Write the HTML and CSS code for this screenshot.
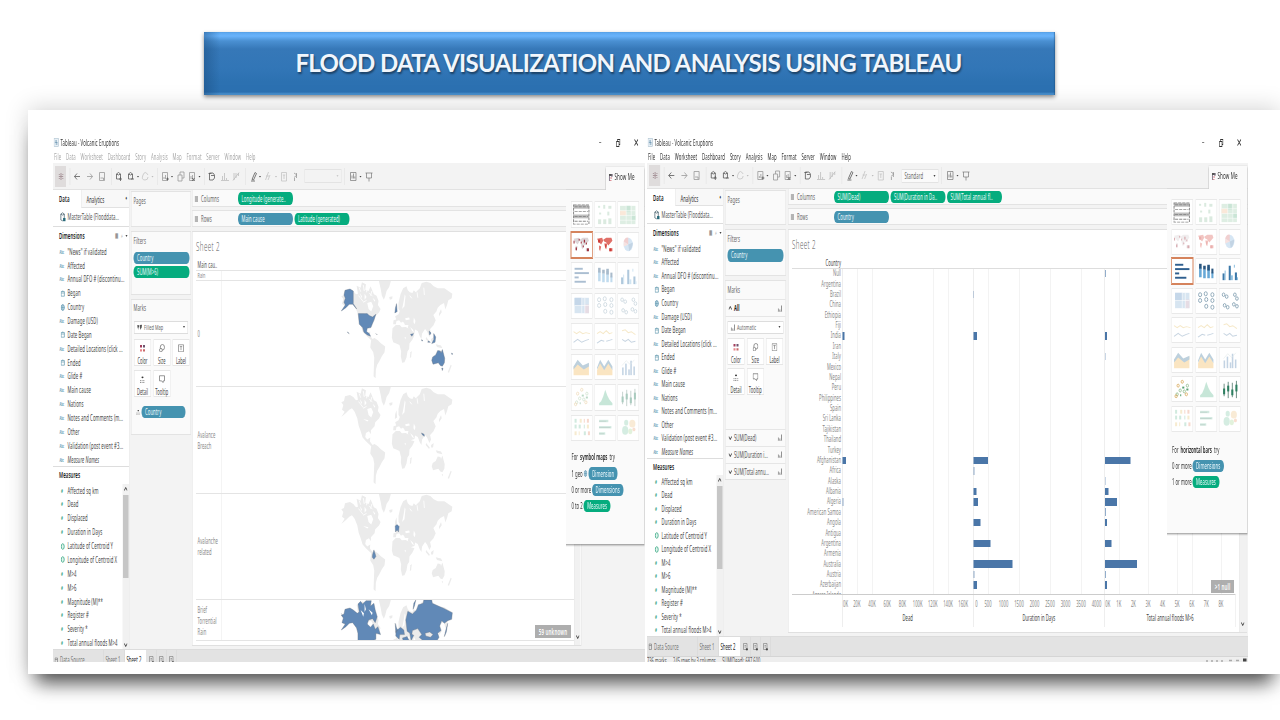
FILE: index.html
```html
<!DOCTYPE html>
<html lang="en">
<head>
<meta charset="utf-8">
<title>Flood data visualization</title>
<link rel="stylesheet" href="styles.css">
</head>
<body>
<svg class="defs" width="0" height="0">
  <symbol id="world" viewBox="30 0 340 320" preserveAspectRatio="none">
    <path d="M45 28L60 24L70 30L78 40L84 38L80 14L92 20L96 4L108 10L106 26L116 30L122 16L132 40L140 44L146 60L144 72L152 84L148 94L136 106L134 118L123 130L123 142L117 133L108 138L106 150L112 158L121 152L120 164L128 174L124 178L108 163L98 152L92 132L86 116L82 94L74 74L66 64L58 68L48 78L34 90L44 74L36 68L40 54L34 46L42 42Z"/>
    <path d="M124 176L134 171L144 178L152 186L166 197L164 214L156 226L148 242L142 252L138 266L137 292L131 286L132 258L133 230L130 214L121 200Z"/>
    <path d="M147 0H183L178 18L170 30L166 46L162 56L156 44L152 22Z"/>
    <path d="M188 142L198 132L210 132L216 139L228 138L238 144L244 160L254 163L248 176L239 188L238 204L233 212L230 230L224 244L217 246L213 226L214 212L209 192L199 188L190 184L186 170Z"/>
    <path d="M242 214L246 210L244 228L240 232Z"/>
    <path d="M178 48L188 46L187 54L180 56ZM196 82L200 70L202 92L195 96Z"/>
    <path d="M206 66L212 40L220 22L230 16L234 28L240 34L248 36L252 28L258 34L270 22L276 6L290 2L302 6L312 16L324 22L344 22L356 30L368 38L366 52L356 58L352 72L347 86L343 66L332 72L324 80L320 92L311 102L318 118L311 134L301 144L304 158L299 168L292 152L286 144L277 158L275 174L270 166L264 150L256 146L254 156L242 160L234 140L236 132L222 132L218 122L214 126L208 118L200 120L198 130L190 130L191 118L199 116L196 106L206 100L210 90L206 84Z"/>
    <path d="M306 238L309 228L318 222L324 209L332 210L334 216L338 206L345 232L344 246L338 256L332 254L326 246L310 250ZM336 262L340 262L338 269ZM363 252L366 254L358 276L354 274Z"/>
    <path d="M289 168L300 182L298 186L288 174ZM304 174L312 168L310 182L304 182ZM318 190L334 194L338 202L322 198ZM328 98L334 84L336 94L328 106Z"/>
    <g class="water"><path d="M90 36L96 46L94 52ZM104 38L110 48L104 56ZM112 66L124 62L130 76L124 92L116 84ZM128 50L136 58L134 62ZM222 58L225 40L227 46L224 76L217 84ZM252 110L257 120L255 130L251 124ZM226 112L238 110L240 116L228 118ZM202 128L222 124L226 134L212 132ZM241 138L247 150L253 154L249 146ZM100 96L116 100L112 104ZM224 170L228 168L227 176Z"/><path d="M100 12L103 30M86 44L100 62M118 36L128 46M88 20L92 32M112 14L110 34M126 30L122 44M100 64L110 58M262 34L264 50M282 20L284 42M240 44L246 52" fill="none" stroke="#fff" stroke-width="2.5"/></g>
  </symbol>

  <symbol id="tools-main" viewBox="0 0 249 27">
    <rect x="2" y="3" width="11" height="21" fill="#dfdcdc"/>
    <path d="M8 10v7M5.800 13.500h4.400M6.300 11v1M9.800 11v1M6.300 15v1M9.800 15v1" stroke="#a8959a" stroke-width="1"/>
    <path d="M17 5v17M58.500 5v17M104.500 5v17M151.500 5v17M192.500 5v17" stroke="#e3e3e3" stroke-width=".6"/>
    <path d="M27 13.500H21.500M24 10.500L21.500 13.500L24 16.500" class="ic dark"/>
    <path d="M34 13.500H39.500M37 10.500L39.500 13.500L37 16.500" class="ic"/>
    <path d="M46.500 9.500h5v8h-5zM47.500 15h3v2" class="ic"/>
    <g class="ic dark"><path d="M63.500 11q2-3 4 0v5h-4zM63.500 11q2 2 4 0"/><path d="M66 16h3M67.500 14v4"/><path d="M75.500 11q2-3 4 0v5h-4zM75.500 11q2 2 4 0"/><path d="M78 16h3"/></g>
    <path d="M95 12q-3-5-5 0t2 5q3 0 3-3" class="ic soft"/>
    <path d="M84 13h2l-1 1.500zM118 13h2l-1 1.500zM145.500 13h2l-1 1.500zM206 13h2l-1 1.500z" fill="#444"/>
    <path d="M98.500 13h2l-1 1.500zM222 13h2l-1 1.500z" fill="#bbb"/>
    <g class="ic"><path d="M109.500 9.500h5v8h-5zM111 16v-2M112.500 16v-4M125 12h4v6h-4zM127 12v-3h4v6h-2M136.500 9.500h5v8h-5zM138 16v-3M139.500 16v-4"/></g>
    <path d="M113 16h3M114.500 14.500v3M139 15l2.500 3M141.500 15l-2.500 3" class="ic dark"/>
    <path d="M156.500 10h3.500l1.500 2v3l-1.500 2h-3.500zM155.500 10.500h3M158 12.500h3" class="ic dark"/>
    <g class="ic sort"><path d="M169.500 17v-4M171.500 17v-7M173.500 17v-2M168 17.500h8M181 10v7M183 10v5M185.500 10v3M180 17.500l6-8"/></g>
    <path d="M199 16.500l3-7 1.500 1-3 6.500zM198 18h4" class="ic dark"/>
    <path d="M212.500 17l3-8M215 17l2-5M213 13h3" class="ic soft"/>
    <path d="M228.500 9.500h5v8.500h-5zM229.800 12h2.400M231 12v4" class="ic soft"/>
    <path d="M241 10l3 2-3 2.500M243.500 10v5M241.500 15v3" class="ic"/>
  </symbol>
  <symbol id="tools-end" viewBox="0 0 36 27">
    <path d="M3 5v17" stroke="#e3e3e3" stroke-width=".6"/>
    <path d="M9 9.500h5.500v8h-5.500zM10.500 15.500v-3M12 15.500v-5M13.300 15.500v-2M24 10h7M25 10v5h5v-5M27.500 15v3.500" class="ic mid"/>
    <path d="M18 13h2l-1 1.500z" fill="#444"/>
  </symbol>

  <symbol id="i-date" viewBox="0 0 5 7"><path d="M.7 1.500h3.600v4.700H.7zM.7 3h3.600M2.500.5v1" fill="none" stroke="#5b94ab" stroke-width=".7"/></symbol>
  <symbol id="i-globe" viewBox="0 0 5 7"><ellipse cx="2.500" cy="3.500" rx="1.800" ry="2.900" fill="#d2e6ee" stroke="#4a87a5" stroke-width=".7"/><path d="M2.500.6v5.800M.7 3.500h3.600" stroke="#4a87a5" stroke-width=".5"/></symbol>
  <symbol id="i-geo" viewBox="0 0 5 7"><ellipse cx="2.500" cy="3.500" rx="1.600" ry="2.800" fill="#e2f5ee" stroke="#2da37c" stroke-width=".8"/></symbol>
  <symbol id="i-db" viewBox="0 0 7 10"><path d="M1 2q2-2.400 4 0v6q-2 1.500-4 0zM1 2.200q2 1.800 4 0" fill="none" stroke="#4a6470" stroke-width=".8"/><rect x="3.600" y="6" width="2.800" height="3.200" fill="#276a7a"/></symbol>
  <symbol id="i-app" viewBox="0 0 6 9"><rect x=".5" y=".5" width="5" height="8" fill="#e8f0f6" stroke="#a9bfcd" stroke-width=".6"/><path d="M3 2v5M1.500 4.500h3M1.700 3h.8M3.700 6h.8" stroke="#5484a4" stroke-width=".6"/></symbol>
  <symbol id="i-shelf" viewBox="0 0 4 6"><path d="M0 1h4M0 3h4M0 5h4" stroke="#555" stroke-width=".9"/></symbol>
  <symbol id="i-bars" viewBox="0 0 6 7"><path d="M1 6.500v-3M2.800 6.500v-2M4.800 6.500v-6" stroke="#888" stroke-width="1"/><path d="M0 6.500h6" stroke="#aaa" stroke-width=".5"/></symbol>
  <symbol id="i-map" viewBox="0 0 6 7"><path d="M.3 1l2 .3v1.400l-.8 1.200v2L.6 3.500zM3 1l2.500-.3-.5 3.300-.7.500-.4 1.500-.7-2z" fill="#555"/></symbol>
  <symbol id="i-detail" viewBox="0 0 6 9"><circle cx="3" cy="2.500" r="1" fill="#333"/><path d="M.5 6h5M.5 8h5" stroke="#888" stroke-width="1" stroke-dasharray="1 .6"/></symbol>
  <symbol id="i-color" viewBox="0 0 6 9"><path d="M.5 1h2v2.800h-2z" fill="#a33e5c"/><path d="M3.500 1h2v2.800h-2z" fill="#6d5471"/><path d="M.5 5.500h2v2.500h-2z" fill="#e8848a"/><path d="M3.500 5.500h2v2.500h-2z" fill="#c86a6a"/></symbol>
  <symbol id="i-size" viewBox="0 0 6 9"><ellipse cx="3.400" cy="3.500" rx="2.100" ry="3" fill="none" stroke="#666" stroke-width=".7"/><ellipse cx="1.900" cy="6.500" rx="1.400" ry="1.900" fill="#fff" stroke="#666" stroke-width=".7"/></symbol>
  <symbol id="i-label" viewBox="0 0 6 9"><path d="M.5.800h5v7.400h-5zM1.800 2.700h2.400M3 2.700v3.800" fill="none" stroke="#666" stroke-width=".6"/></symbol>
  <symbol id="i-tip" viewBox="0 0 6 9"><path d="M.5.800h5v5.400H4.300L4 8 2.600 6.200H.5z" fill="none" stroke="#666" stroke-width=".7"/></symbol>
  <symbol id="i-showme" viewBox="0 0 5 9"><path d="M.5 1h3.800v2H.5z" fill="#555"/><path d="M1 3v5M3.800 1v3" stroke="#7a6b80" stroke-width="1"/><path d="M2 5h1.800M2 7.500h1.200" stroke="#d0606a" stroke-width="1"/></symbol>
  <symbol id="i-newtab" viewBox="0 0 5 8"><path d="M.5.500h3.500v6h-3.500zM1.500 2.500h1.500M1.500 4h1.500" fill="none" stroke="#777" stroke-width=".6"/><path d="M2.800 6.300h2.200M3.900 5v2.600" stroke="#333" stroke-width=".8"/></symbol>
</svg>

<header class="banner"><span>FLOOD DATA VISUALIZATION AND ANALYSIS USING TABLEAU</span></header>
<main class="frame" id="frame"></main>
<script src="app.js"></script>
</body>
</html>
```

FILE: styles.css
```css
* { box-sizing: border-box; }
body {
  margin: 0; width: 1280px; height: 720px; overflow: hidden; background: #fff;
  font-family: "Noto Sans", "Open Sans", sans-serif; color: #333;
}
svg { display: block; flex: none; }
.defs { position: absolute; }
.ic { fill: none; stroke: #999; stroke-width: .8; }
.ic.dark { stroke: #5a5a5a; }
.ic.mid { stroke: #777; stroke-width: .7; }
.ic.soft { stroke: #c4c4c4; }
.ic.sort { stroke: #bdbdbd; }
.right .ic.sort { stroke: #808080; }

.banner {
  width: 851px; height: 63px; margin: 32px 0 0 204px;
  display: flex; align-items: center; justify-content: center;
  background:
    linear-gradient(to right, rgba(25,75,125,.45), rgba(49,117,181,0) 16px),
    linear-gradient(to bottom, #5ba6ee 0, #69b3fb 4px, #4a90d2 9px, #3678b8 17px, #3276b7 36px, #2c71b1 50px, #2c71b2 60px, #4b92d0 62px);
  box-shadow: 0 2px 4px rgba(0,0,0,.45), inset -1px 0 1px rgba(30,80,130,.5);
}
.banner span {
  font: bold 24px Lato, "Open Sans", sans-serif; color: #f1f6fc; white-space: nowrap;
  letter-spacing: -.63px; text-shadow: 1px 2px 2px rgba(0,0,0,.45); padding: 0 2px 2px 0;
}
.frame {
  display: flex; gap: 1px; width: 1252px; height: 564px; margin: 15px 0 0 28px; padding: 26px 0 0 25px;
  background: #fff;
  box-shadow: 0 17px 18px -8px rgba(0,0,0,.66), 0 -2px 22px rgba(0,0,0,.17);
}
.slot { width: 593px; height: 526px; flex: none; }
.slot.right { width: 601px; }

/* Windows are laid out at double width and condensed horizontally. */
.win {
  position: relative; width: 1184px; height: 526px; overflow: hidden;
  display: flex; flex-direction: column;
  transform: scaleX(.5); transform-origin: 0 0;
  font-size: 8.500px; line-height: 10px; white-space: nowrap;
}
.right .win { width: 1202px; }
.left { --row: 13.87px; }
.right { --row: 13.52px; }

.titlebar { height: 13px; display: flex; align-items: center; padding-left: 1px; gap: 3px; color: #333; flex: none; }
.titlebar .ttl { flex: 1; letter-spacing: .2px; }
.titlebar i { font-style: normal; width: 36px; margin-left: -3px; text-align: center; font-size: 9px; }
.titlebar i:first-of-type { margin-left: 0; }
.titlebar i svg { margin: 0 auto; }
.menu { height: 14px; flex: none; display: flex; align-items: center; padding: 2px 0 0 2px; gap: 9.500px; letter-spacing: .2px; color: #aaa; }
.right .menu { color: #333; gap: 9.800px; }
.toolbar { height: 27px; flex: none; display: flex; align-items: center; background: #f3f3f3; border-bottom: 1px solid #e2e2e2; }
.right .toolbar { height: 26px; }
.toolbar .sel {
  width: 74px; height: 14px; margin-left: 5px; border: 1px solid #e3e3e3; padding: 0 5px 0 5px;
  display: flex; align-items: center; justify-content: space-between; font-size: 8.300px; letter-spacing: .2px; color: #666;
}
.right .toolbar .sel { background: #fafafa; }
.left .sel { color: #ccc; }
.arrow { width: 0; height: 0; border: 2.500px solid transparent; border-top: 2.500px solid #444; border-bottom: 0; flex: none; }
.left .sel .arrow { border-top-color: #ccc; }

.body { flex: none; height: 459px; display: flex; background: #f3f3f3; }
.right .body { height: 447px; }
.side { width: 153px; background: #fff; border-right: 1px solid #e2e2e2; flex: none; display: flex; flex-direction: column; }
.tabs { height: 18px; display: flex; flex: none; }
.right .tabs { height: 17px; }
.tabs b, .sect b { font-weight: 600; color: #222; }
.tabs b { width: 57px; padding: 4px 0 0 12px; font-size: 8.800px; letter-spacing: .2px; }
.tabs div { flex: 1; display: flex; justify-content: space-between; padding: 5px 4px 0 9px; background: #f8f8f8; border-left: 1px solid #e2e2e2; border-bottom: 1px solid #e2e2e2; }
.tabs div span + span { font-size: 6px; line-height: 6px; }
.source { height: 19px; flex: none; display: flex; align-items: center; gap: 3px; padding-left: 14px; border-bottom: 1px solid #ddd; letter-spacing: .1px; color: #555; }
.right .source { height: 18px; }
.sect { height: 17px; flex: none; display: flex; align-items: center; padding-left: 12px; font-size: 8.800px; }
.left .source + .sect { height: 17.800px; }
.right .source + .sect { height: 18.200px; }
.right .dims + .sect { height: 16.400px; }
.sect b { flex: 1; letter-spacing: .1px; }
.sect span { font-size: 7px; color: #777; margin-right: 5px; }
.list { display: flex; flex-direction: column; }
.dims { height: calc(var(--row) * 16); border-bottom: 1px solid #ddd; flex: none; }
.item { height: var(--row); flex: none; display: flex; align-items: center; color: #444; letter-spacing: .2px; }
.item .k { width: 29px; padding-left: 13px; flex: none; font-size: 4.800px; font-weight: bold; color: #5c9ab3; letter-spacing: 0; }
.item .k.num { font-size: 6px; padding-left: 16px; color: #2f9f80; }
.item .k svg { margin-left: 2px; }
.item.it { font-style: italic; }
.meas { display: flex; height: calc(var(--row) * 12); overflow: hidden; }
.meas .list { flex: 1; width: 0; }
.scroll { width: 13px; background: #f1f1f1; display: flex; flex-direction: column; align-items: center; flex: none; }
.scroll i { display: block; width: 11px; height: 83px; background: #c6c6c6; margin-top: 2px; flex: none; }
.scroll s { flex: 1; }
.scroll svg, .vbar svg { margin: 3px 0 2px; }

.cards { width: 125px; padding: 1px 2px 0 3px; display: flex; flex-direction: column; gap: 4px; flex: none; color: #666; }
.right .cards { width: 129px; padding: 1px 4px 0 3px; }
.card { background: #fafafa; border: 1px solid #e3e3e3; padding: 4px 4px 0; flex: none; }
.card > h4 { font: inherit; margin: 0; letter-spacing: .1px; }
.pages { height: 36px; } .right .pages { height: 35px; }
.filters { height: 64px; } .right .filters { height: 47px; }
.marks { height: 136px; padding-top: 3px; } .right .marks { height: 200px; padding: 4px 0 0; }
.right .marks > h4 { margin-left: 4px; }
.pill { height: 12.500px; border-radius: 6px; background: #4593b0; color: #eef9fd; display: flex; align-items: center; padding: 0 7px; overflow: hidden; letter-spacing: .12px; font-size: 8.500px; flex: none; }
.pill.g { background: #05ac7e; }
.filters .pill { width: 112px; height: 12.500px; margin-bottom: 1.800px; }
.filters h4 { padding-bottom: 5.500px; }
.right .filters h4 { padding-bottom: 5px; }
.mtype { height: 12.500px; margin: 8px 1px 4px; border: 1px solid #ddd; background: #fff; display: flex; align-items: center; gap: 3px; padding: 0 5px; font-size: 7.800px; }
.left .mtype { margin-bottom: 5px; }
.mtype span { flex: 1; letter-spacing: .1px; }
.right .mtype { margin: 4px 4px 4px; }
.mgrid { display: grid; grid-template-columns: repeat(3, 34px); column-gap: 4.500px; row-gap: 4px; margin-left: 1px; }
.right .mgrid { margin-left: 4px; grid-auto-rows: 26.500px; }
.mgrid div { height: 27px; background: #fff; border: 1px solid #e6e6e6; display: flex; flex-direction: column; align-items: center; padding-top: 4px; gap: 3.500px; font-size: 8px; line-height: 9px; color: #444; }
.mdetail { display: flex; align-items: center; gap: 2px; margin: 9px 0 0 5px; }
.mdetail .pill { width: 88px; }
.all { height: 18px; margin-top: 4px; border-top: 1px solid #e6e6e6; border-bottom: 1px solid #e6e6e6; display: flex; align-items: center; padding: 0 6px; gap: 4px; color: #222; }
.all b, .all span { flex: 1; }
.accs { margin-top: 34px; }
.accs .all { margin: 0; height: 17.200px; border-bottom: 0; color: #555; }

.main { flex: 1; display: flex; flex-direction: column; }
.shelf { height: 17px; flex: none; display: flex; align-items: center; gap: 3px; background: #fafafa; border: 1px solid #e3e3e3; border-top: 0; padding: 1px 0 0 4px; color: #666; letter-spacing: .15px; }
.shelf .nm { width: 84px; display: flex; align-items: center; gap: 6px; }
.shelf .pill { width: 110px; height: 12.500px; }
.shelf + .shelf { margin-top: 3px; height: 17px; border-top: 1px solid #e3e3e3; }
.right .shelf { height: 16px; } .right .shelf + .shelf { height: 17px; }
.sheet { margin-top: 4px; width: 779px; height: 415px; background: #fff; border: 1px solid #e0e0e0; display: flex; flex: none; }
.right .sheet { width: 918px; height: 404px; }
.sheet .cont { flex: 1; padding: 7px 0 0 7px; display: flex; flex-direction: column; }
.sheet h2 { font: 300 12.500px/16px "Open Sans", "Noto Sans", sans-serif; margin: 0; color: #555; letter-spacing: .8px; height: 21px; flex: none; }
.maps { width: 756px; display: flex; flex-direction: column; color: #888; }
.hdr { height: 11px; color: #555; padding-left: 3px; flex: none; font-size: 8px; letter-spacing: .1px; border-bottom: 1px solid #e4e4e4; }
.band { height: 106.500px; border-bottom: 1px solid #e4e4e4; display: flex; flex: none; overflow: hidden; font-size: 8.300px; }
.band .lb { width: 51px; border-right: 1px solid #e8e8e8; padding-left: 3px; display: flex; align-items: center; line-height: 11px; flex: none; white-space: pre; letter-spacing: .1px; }
.band svg { margin-left: 237px; width: 226px; height: 106.500px; }
.band.first { height: 9.500px; }
.band.first .lb { align-items: flex-start; line-height: 8px; font-size: 7.500px; padding-top: 0; }
.band.last { height: 41px; }
.vbar { width: 14px; margin-right: 1px; background: #f1f1f1; border-left: 1px solid #e6e6e6; display: flex; align-items: flex-end; justify-content: center; padding-bottom: 4px; }
.note { position: absolute; background: #aaa; color: #fff; font-weight: 600; font-size: 9px; letter-spacing: .3px; height: 13px; display: flex; align-items: center; justify-content: center; opacity: .95; }
.left .note { left: 964px; top: 489px; width: 72px; }
.right .note { left: 1128px; top: 444px; width: 46px; }
.land { fill: #ebebeb; } .land .water, .water { fill: #fff; }
.hot path { fill: #6189b7; stroke: #66707c; stroke-width: 1; }

.chart { display: flex; flex-direction: column; width: 887px; }
.chart .chead { height: 10px; width: 98px; text-align: right; flex: none; font-size: 8px; line-height: 9px; color: #444; letter-spacing: .1px; }
.plot { height: 327px; overflow: hidden; border-top: 1px solid #ddd; border-bottom: 1px solid #ccc; flex: none; display: grid; grid-template-columns: 100px 262px 262.500px 262.500px; }
.names { text-align: right; padding-right: 2px; font-size: 8.300px; color: #888; letter-spacing: .1px; margin-top: -.8px; }
.names div { height: 10.390px; line-height: 10.390px; }
.lane { border-left: 1px solid #ddd; }
.lane.a { background: repeating-linear-gradient(to right, transparent 0 29.400px, #f3f3f3 29.400px 30.400px); }
.lane.b { background: repeating-linear-gradient(to right, transparent 0 30px, #f3f3f3 30px 31px); }
.lane.c { background: repeating-linear-gradient(to right, transparent 0 28.200px, #f3f3f3 28.200px 29.200px); }
.lane div { height: 10.390px; padding-top: .800px; }
.lane i { display: block; height: 7.600px; background: #4a76a8; }
.axes { display: grid; grid-template-columns: 100px 262px 262.500px 262.500px; height: 32px; border-right: 1px solid #e4e4e4; }
.axes > div { border-left: 1px solid #ddd; display: flex; flex-direction: column; align-items: center; font-size: 8.300px; color: #444; gap: 4.500px; padding-top: 3.500px; min-width: 0; letter-spacing: .05px; }
.axes > div:first-child { border: 0; }
.ticks { display: flex; width: 100%; color: #888; }
.ticks span { display: flex; justify-content: center; flex: none; }
.ticks span:first-child { width: 12px; margin-right: 1.500px; }
.tk-a span { width: 30.400px; } .tk-b span { width: 31px; } .tk-c span { width: 29.200px; }

.bottom { height: 20px; flex: none; background: #e3e3e3; display: flex; border-top: 1px solid #dcdcdc; color: #777; align-items: stretch; }
.bottom > * { display: flex; align-items: center; border-right: 1px solid #d5d5d5; padding: 0 9px 0 6px; }
.bottom .ds { width: 102px; padding: 0 0 0 3px; gap: 4px; letter-spacing: .1px; }
.bottom .s1 { width: 42px; padding: 0 2px 0 3px; }
.bottom .on { background: #fff; color: #222; width: 43px; padding: 0 3px; }
.bottom .nt { width: 20px; padding: 0 5px; }
.left .bottom { height: 21px; }
.status { height: 6px; flex: none; overflow: hidden; background: #eee; border-top: 1px solid #d5d5d5; color: #555; display: flex; gap: 13px; font-size: 8px; line-height: 8px; }
.status svg { margin-left: auto; }

.showme { position: absolute; right: 1px; top: 31px; width: 157px; height: 377px; display: flex; flex-direction: column; align-items: flex-end; filter: drop-shadow(0 1px 1px rgba(0,0,0,.45)); }
.right .showme { width: 161px; height: 367px; top: 30px; }
.smtab { width: 78px; height: 23px; background: #fafafa; display: flex; align-items: center; gap: 3px; padding: 0 0 3px 6px; font-size: 9px; letter-spacing: .3px; flex: none; }
.smbody { flex: 1; width: 100%; background: #fafafa; padding: 11px 0 0 10px; }
.thumbs { display: grid; grid-template-columns: repeat(3, 43px); column-gap: 3.500px; grid-auto-rows: 26.500px; row-gap: 4px; }
.thumbs div { background: #fff; border: 1px solid #e9e9e9; display: flex; align-items: center; justify-content: center; }
.thumbs div.sel { border: 1.500px solid #d5835c; outline: .5px solid #d5835c; }
.thumbs div svg { opacity: .4; }
.thumbs div.half svg { opacity: .75; }
.thumbs div.en svg { opacity: 1; }
.right .smbody { padding: 10px 0 0 9px; }
.right .thumbs { grid-auto-rows: 26px; row-gap: 3.550px; column-gap: 4.500px; }
.try { margin-top: 10px; padding-left: 1px; font-size: 8.500px; display: flex; flex-direction: column; gap: 3.800px; }
.right .try { margin-top: 12px; gap: 3.500px; }
.try b { font-weight: 600; color: #222; margin: 0 2px; }
.try div { display: flex; align-items: center; gap: 2px; height: 12.500px; }
.try .pill { padding: 0 7px; height: 12.500px; }
```

FILE: app.js
```js
const svg = (id, w, h, c = '') =>
  `<svg class="${c}" width="${w * 2}" height="${h}" preserveAspectRatio="none"><use href="#${id}" width="${w * 2}" height="${h}"/></svg>`;
document.querySelectorAll('.defs symbol').forEach(s => s.setAttribute('preserveAspectRatio', 'none'));

const dims = [['a', '"News" if validated'], ['a', 'Affected'], ['a', 'Annual DFO # (discontinu...'], ['d', 'Began'], ['g', 'Country'],
  ['a', 'Damage (USD)'], ['d', 'Date Began'], ['a', 'Detailed Locations (click ...'], ['d', 'Ended'], ['a', 'Glide #'], ['a', 'Main cause'],
  ['a', 'Nations'], ['a', 'Notes and Comments (m...'], ['a', 'Other'], ['a', 'Validation (post event #3...'], ['a', 'Measure Names']];
const meas = ['Affected sq km', 'Dead', 'Displaced', 'Duration in Days', 'Latitude of Centroid Y', 'Longitude of Centroid X',
  'M>4', 'M>6', 'Magnitude (M)**', 'Register #', 'Severity *', 'Total annual floods M>4'];
const kind = k => k === 'a' ? '<span class="k">Abc</span>'
  : k === 'n' ? '<span class="k num">#</span>'
  : `<span class="k">${svg({ d: 'i-date', g: 'i-globe', e: 'i-geo' }[k], 4.5, 7)}</span>`;
const chev = up => `<svg width="7" height="4" viewBox="0 0 7 4"><path d="${up ? 'M.5 3.500L3.500.5L6.500 3.500' : 'M.5.5L3.500 3.500L6.500.5'}" fill="none" stroke="#444" stroke-width="1.100"/></svg>`;

const side = () => `<aside class="side">
  <div class="tabs"><b>Data</b><div><span>Analytics</span><span>♦</span></div></div>
  <div class="source">${svg('i-db', 6, 10)}<span>MasterTable (Flooddata...</span></div>
  <div class="sect"><b>Dimensions</b><span>▦</span><span>⌕</span><i class="arrow" style="margin-right:3px"></i></div>
  <div class="list dims">${dims.map(([k, t]) => `<div class="item${t === 'Measure Names' ? ' it' : ''}">${kind(k)}<span>${t}</span></div>`).join('')}</div>
  <div class="sect"><b>Measures</b></div>
  <div class="meas"><div class="list">${meas.map(t => `<div class="item">${kind(/Centroid/.test(t) ? 'e' : 'n')}<span>${t}</span></div>`).join('')}</div>
  <div class="scroll">${chev(true)}<i></i><s></s>${chev(false)}</div></div></aside>`;

const mgrid = `<div class="mgrid">${[['color', 'Color'], ['size', 'Size'], ['label', 'Label'], ['detail', 'Detail'], ['tip', 'Tooltip']]
  .map(([i, t]) => `<div>${svg('i-' + i, 6, 8.5)}<span>${t}</span></div>`).join('')}</div>`;
const pill = (t, g) => `<div class="pill${g ? ' g' : ''}">${t}</div>`;

const rects = (a, f) => a.map(([x, y, w, h]) => `<rect x="${x}" y="${y}" width="${w}" height="${h}" fill="${f}"/>`).join('');
const line = (d, c, w = 1) => `<path d="${d}" fill="none" stroke="${c}" stroke-width="${w}"/>`;
const dots = (a, c, r = 1) => a.map(([x, y]) => `<ellipse cx="${x}" cy="${y}" rx="${r}" ry="${r * 1.4}" fill="none" stroke="${c}" stroke-width=".8"/>`).join('');
const mini = c => `<path d="M2 7l5-1 1 3-2 4-2-2zM4 14l2 1-1 5-1-2zM8 8l3-2 5 0 1 3-4 5-2-3-2-1zM9 12h3l-1 6-1-1zM14 17h3v3h-3z" fill="${c}"/>`;
const icons = [
  rects([[2, 3, 15, 4], [2, 13, 15, 4]], '#aaa') + '<path d="M2 3h15v20H2zM3 5h13M3 10h13M3 15h13M3 20h13" fill="none" stroke="#666" stroke-dasharray="3 1"/>',
  rects([[3, 4, 2, 2], [8, 3, 2, 4], [13, 4, 3, 3], [4, 11, 2, 2], [12, 10, 2, 4], [3, 18, 3, 5], [8, 18, 3, 5], [13, 17, 3, 6]], '#a6cdb2'),
  rects([[2, 4, 15, 19]], '#aed6bb') + rects([[2, 9, 6, 5]], '#f3c7a1') + rects([[8, 4, 4, 6], [13, 14, 4, 5]], '#7cc09b') + line('M2 9h15M2 14h15M2 19h15M8 4v19M13 4v19', '#fff', .5),
  mini('#dcd6d8') + rects([[2, 9, 1, 3], [4, 16, 1.3, 3], [7, 7, 1, 2], [9, 10, 1, 2], [12, 8, 1.2, 3], [14, 11, 1, 2], [15, 17, 2, 3], [11, 14, 1, 2]], '#9c2f3d'),
  mini('#e06f68') + rects([[3, 8, 2, 3], [14, 17, 2, 3], [10, 13, 1, 3]], '#cc3a36'),
  '<ellipse cx="10" cy="13" rx="4.500" ry="7" fill="#9bc3e5"/><path d="M10 13L5.500 10Q7 5 10 6z" fill="#de8b8b"/><path d="M10 13L14.500 11Q14 17 11 20z" fill="#6b96bd"/><path d="M10 13L5.600 15L5.500 10z" fill="#f0b9b4"/>',
  rects([[3, 5, 8, 2], [3, 9.500, 14, 2], [3, 14, 4, 2], [3, 18.500, 11, 2]], '#2f5f8f'),
  rects([[3, 9, 2.5, 10], [7, 11, 2.5, 9], [11, 8, 2.5, 12], [15, 14, 2, 6]], '#67a8d6') + rects([[3, 5, 2.5, 5], [7, 7, 2.5, 4], [11, 6, 2.5, 6], [15, 10, 2, 5]], '#2a567f'),
  rects([[3, 15, 2, 7], [9, 7, 2, 15], [15, 14, 2, 8]], '#3b78a9') + rects([[5, 12, 1, 10], [11, 17, 2, 5], [17, 19, 1, 3], [14, 6, 1, 3]], '#8fc0e0'),
  rects([[3, 5, 14, 16]], '#9dbfdd') + rects([[3, 5, 7, 8]], '#6f9cc9') + rects([[13, 12, 4, 9]], '#c3a9bd') + line('M10 5v16M3 13h14M13 5v16', '#fff', .6),
  dots([[4, 7], [9.500, 6], [16, 7], [4, 13], [10, 12], [16, 13], [10, 19], [16, 20]], '#7c9aad', 1.5),
  dots([[4, 7], [7, 9], [15, 7], [17, 11], [5, 18], [8, 20], [14, 17], [17, 19]], '#7c9aad', 1.3),
  line('M2 8l3 2 3-2 3 2 3-1 4 1', '#e8c777') + line('M2 19l4-3 4 3 4-2 3-1', '#7596b5'),
  line('M2 10l3-2 3 2 3-3 3 3 3-1', '#e8c777') + line('M2 20l4-3 3 1M11 18l3-1 3-1', '#7596b5'),
  line('M4 7l3-1 3 3 3-1 4 3', '#e8c777') + line('M4 16l3 2 3-2 3 3 4-1', '#7596b5'),
  '<path d="M2 13l4-5 6 5 5-3v12H2z" fill="#f5bf68"/><path d="M2 13l4-7 5 6 6-3v4l-5 3-6-5-4 5z" fill="#5b8cab"/>',
  '<path d="M2 17l3-9 4 8 4-8 4 9v5H2z" fill="#f5bf68"/><path d="M2 14l3-8 4 7 4-7 4 7v4l-4-7-4 7-4-7-3 6z" fill="#5b8cab"/>',
  rects([[4, 14, 1.5, 8], [7, 10, 1.500, 12], [10, 16, 1.500, 6], [12, 7, 1.500, 15], [15, 13, 1.500, 9]], '#6b93ba') + line('M4 12l4-5 4 4 4-5', '#bcc', .6),
  dots([[5, 18], [8, 14], [12, 15], [15, 9]], '#8fb98a', 1.1) + dots([[6, 9], [4, 20], [10, 5], [14, 18]], '#d9a95b', 1.1) + rects([[10, 10, 2, 2], [14, 12, 2, 2], [8, 18, 1, 2]], '#5aa173'),
  '<path d="M4 21v-2l2-2 2-5 2-7 2 6 2 4 3 4v2z" fill="#74c3a0"/>',
  line('M4.500 7v13M8.500 5v17M12.500 6v15M16.500 4v18', '#4b7466', .8) + rects([[3.5, 12, 2, 6], [7.5, 9, 2, 6], [11.5, 13, 2, 6], [15.5, 8, 2, 7]], '#2e7f61'),
  rects([[3, 4, 2, 4], [3, 10, 2, 4], [7, 10, 2, 4], [12, 10, 1, 4], [12, 17, 2, 4]], '#8ecbb0') + rects([[8, 4, 2, 4], [3, 17, 2, 4], [15, 10, 2, 4], [7, 17, 1, 4]], '#eccf8b') + rects([[12, 4, 1, 4], [15, 4, 2, 4], [16, 17, 2, 4]], '#eb9f84'),
  rects([[4, 5, 9, 2.5], [4, 11.500, 12, 2.500], [4, 18, 6, 2.500]], '#92cbb5') + rects([[4, 6, 7, 1], [4, 12.500, 11, 1], [4, 19, 5, 1]], '#689a88'),
  '<ellipse cx="7" cy="16" rx="3" ry="4.500" fill="#98d3b7"/><ellipse cx="14" cy="9" rx="3" ry="4" fill="#f2cf9b"/><ellipse cx="8" cy="8" rx="2" ry="3" fill="#98d3b7"/><ellipse cx="12" cy="17" rx="2" ry="3" fill="#b9dfa9"/><ellipse cx="15.500" cy="15" rx="1.500" ry="2" fill="#eeb18f"/>',
];
const showMe = (on, sel, tips) => `<div class="showme"><div class="smtab">${svg('i-showme', 4.5, 9)}<span>Show Me</span></div>
  <div class="smbody"><div class="thumbs">${icons.map((ic, i) =>
    `<div class="${on.includes(i) ? 'en ' : i === 0 ? 'half ' : ''}${i === sel ? 'sel' : ''}"><svg width="41" height="25" viewBox="0 0 20 26" preserveAspectRatio="none">${ic}</svg></div>`).join('')}</div>
  <div class="try">${tips}</div></div></div>`;

const chrome = (inner, o) => `<div class="slot ${o.cls}"><section class="win">
  <div class="titlebar">${svg('i-app', 5.5, 9)}<span class="ttl">Tableau - Volcanic Eruptions</span><i>−</i><i><svg width="9" height="8" viewBox="0 0 9 8"><path d="M1 2.500h5v5H1zM3 2.500V.5h5v5H6" fill="none" stroke="#333" stroke-width="1.200"/></svg></i><i><svg width="9" height="7" viewBox="0 0 9 7"><path d="M1 .5l7 6M8 .5l-7 6" fill="none" stroke="#333" stroke-width="1.100"/></svg></i></div>
  <nav class="menu">${['File', 'Data', 'Worksheet', 'Dashboard', 'Story', 'Analysis', 'Map', 'Format', 'Server', 'Window', 'Help'].map(t => `<span>${t}</span>`).join('')}</nav>
  <div class="toolbar">${svg('tools-main', o.tw, 27)}<div class="sel"><span>${o.fit}</span><i class="arrow"></i></div>${svg('tools-end', 36, 27)}</div>
  <div class="body">${side()}${inner}</div>
  <div class="bottom"><span class="ds"><svg width="7" height="7" viewBox="0 0 7 7"><path d="M1 1h5v5.500H1zM1 2.500h5" fill="none" stroke="#888"/></svg>Data Source</span><span class="s1">Sheet 1</span><span class="on">Sheet 2</span>${`<span class="nt">${svg('i-newtab', 5, 8)}</span>`.repeat(3)}</div>
  ${o.extra}</section></div>`;

const shelf = (n, p) => `<div class="shelf"><span class="nm">${svg('i-shelf', 3.5, 6)}<span>${n}</span></span>${p}</div>`;
const map = (hot = '') => `<svg viewBox="30 0 340 320" preserveAspectRatio="none"><use class="land" href="#world" x="30" width="340" height="320"/><g class="hot">${hot}</g></svg>`;
const hot0 = '<path d="M45 28L60 24L70 30V68L78 80L80 84L68 70L58 70L48 80L34 90L46 72L42 64L46 52L42 42Z"/><path d="M85 98H112L118 104L128 108L138 100L132 118L127 130L123 140L112 142L110 152L118 158L122 166L112 162L102 154L98 140L88 130Z"/><path d="M200 68L202 92L195 96L197 80ZM298 150L300 162L304 156ZM312 158L318 168L316 184L306 188L312 176ZM242 160L252 158L246 166ZM296 180L302 184L294 184ZM276 176L279 180L276 180ZM52 153L58 158L54 156ZM366 216L370 220L366 220ZM138 158L142 162Z"/><path d="M306 238L309 228L318 222L324 209L332 210L334 216L338 206L345 232L344 246L338 256L332 254L326 246L310 250ZM336 262L340 262L338 269Z"/>';
const hot2 = '<path d="M196 96L202 92L208 98L206 114L202 108L197 114ZM128 182L132 168L136 180L138 188L132 196L127 190Z"/>';
const hot3 = '<path d="M45 28L60 24L70 30L82 40L88 36L84 12L92 4L98 12L108 2H124L122 18L132 10L136 30L142 50L136 68L128 56L116 60L112 72L122 82L130 72L136 88L144 80L152 104L138 100V118L128 122H84V100L80 84L68 68L58 70L48 80L34 90L46 72L36 68L40 54L34 46L42 42Z"/><path d="M34 40L38 50M252 10L258 0L254 18L250 28ZM348 92L354 70L350 96L344 110Z"/><path d="M228 60L234 34L248 42L260 30L266 14L280 10L282 0H306L308 10L326 18L340 24L368 38L366 58L354 62L344 70L336 62L330 78L334 92L324 100L328 112L322 122H280L268 112L276 104L264 86L248 92L246 104L232 94Z"/><path d="M196 70L200 84L204 90L198 98ZM198 94L212 82L222 90L224 104L210 104L208 118L198 108ZM218 114L232 110L238 122H220ZM240 100L252 106L244 122Z"/><path d="M286 100L300 96L310 104L302 112L288 108Z" style="fill:#e9e9e9"/><path d="M92 30L102 40L100 50L96 40ZM104 12L108 28L104 36ZM116 28L128 38L126 46Z" style="fill:#fff;stroke:none"/>';

const band = (c, l, m) => `<div class="band ${c}"><div class="lb">${l}</div>${m}</div>`;
const left = `<div class="cards"><div class="card pages"><h4>Pages</h4></div>
  <div class="card filters"><h4>Filters</h4>${pill('Country')}${pill('SUM(M&gt;6)', 1)}</div>
  <div class="card marks"><h4>Marks</h4><div class="mtype">${svg('i-map', 5.5, 7)}<span>Filled Map</span><i class="arrow"></i></div>${mgrid}
  <div class="mdetail">${svg('i-detail', 4.5, 6)}${pill('Country')}</div></div></div>
  <div class="main">${shelf('Columns', pill('Longitude (generate..', 1))}${shelf('Rows', pill('Main cause') + pill('Latitude (generated)', 1))}
  <div class="sheet"><div class="cont"><h2>Sheet 2</h2><div class="maps"><div class="hdr">Main cau..</div>
  ${band('first', 'Rain', '')}${band('', '0', map(hot0))}${band('', 'Avalance\nBreach', map('<path d="M275 138L283 142L284 148L278 144Z"/>'))}${band('', 'Avalanche\nrelated', map(hot2))}${band('last', 'Brief\nTorrential\nRain', map(hot3))}
  </div></div><div class="vbar">${chev(false)}</div></div></div>`;

const names = ['Null', 'Argentina', 'Brazil', 'China', 'Ethiopia', 'Fiji', 'India', 'Iran', 'Italy', 'Mexico', 'Nepal', 'Peru', 'Philippines', 'Spain', 'Sri Lanka', 'Tajikistan', 'Thailand', 'Turkey', 'Afghanistan', 'Africa', 'Alaska', 'Albania', 'Algeria', 'American Samoa', 'Angola', 'Antigua', 'Argentina', 'Armenia', 'Australia', 'Austria', 'Azerbaijan', 'Azores Islands'];
const data = {
  a: { 6: 3.500, 18: 7, 22: 2 },
  b: { 2: 1, 6: 7, 18: 29, 19: 1.500, 21: 5.500, 22: 9, 24: 13.500, 26: 34, 28: 77.500, 29: 1.500, 30: 6.500 },
  c: { 0: 2, 6: 4, 8: 1.500, 18: 51, 20: 1, 21: 7.500, 22: 24, 23: 2, 24: 4, 26: 13.500, 28: 64, 29: 2, 30: 4 },
};
const lane = k => `<div class="lane ${k}">${names.map((_, i) => `<div>${data[k][i] ? `<i style="width:${data[k][i]}px${data[k][i] < 3 ? ';opacity:.6' : ''}"></i>` : ''}</div>`).join('')}</div>`;
const axis = (k, t, a) => `<div><div class="ticks tk-${k}">${a.map(v => `<span>${v}</span>`).join('')}</div><span>${t}</span></div>`;
const acc = t => `<div class="all">${chev(false)}<span>${t}</span>${svg('i-bars', 5, 7)}</div>`;
const right = `<div class="cards"><div class="card pages"><h4>Pages</h4></div>
  <div class="card filters"><h4>Filters</h4>${pill('Country')}</div>
  <div class="card marks"><h4>Marks</h4><div class="all">${chev(true)}<b>All</b>${svg('i-bars', 5, 7)}</div>
  <div class="mtype">${svg('i-bars', 5, 7)}<span>Automatic</span><i class="arrow"></i></div>${mgrid}
  <div class="accs">${acc('SUM(Dead)')}${acc('SUM(Duration i...')}${acc('SUM(Total annu...')}</div></div></div>
  <div class="main">${shelf('Columns', pill('SUM(Dead)', 1) + pill('SUM(Duration in Da..', 1) + pill('SUM(Total annual fl..', 1))}${shelf('Rows', pill('Country'))}
  <div class="sheet"><div class="cont"><h2>Sheet 2</h2><div class="chart"><div class="chead">Country</div>
  <div class="plot"><div class="names">${names.map(n => `<div>${n}</div>`).join('')}</div>${lane('a')}${lane('b')}${lane('c')}</div>
  <div class="axes"><div></div>${axis('a', 'Dead', ['0K', '20K', '40K', '60K', '80K', '100K', '120K', '140K', '160K'])}${axis('b', 'Duration in Days', [0, 500, 1000, 1500, 2000, 2500, 3000, 3500, 4000])}${axis('c', 'Total annual floods M&gt;6', ['0K', '1K', '2K', '3K', '4K', '5K', '6K', '7K', '8K'])}</div>
  </div></div><div class="vbar">${chev(false)}</div></div></div>`;

document.getElementById('frame').innerHTML =
  chrome(left, { cls: 'left', tw: 249, fit: '', extra: '<div class="note">59 unknown</div>' + showMe([3, 4], 3,
    `<div>For <b>symbol maps</b> try</div><div>1 geo ${svg('i-globe', 4, 7)} ${pill('Dimension')}</div><div>0 or more ${pill('Dimensions')}</div><div>0 to 2 ${pill('Measures', 1)}</div>`) }) +
  chrome(right, { cls: 'right', tw: 252, fit: 'Standard', extra: '<div class="status"><span>736 marks</span><span>245 rows by 3 columns</span><span>SUM(Dead): 687,600</span><svg width="120" height="5" viewBox="0 0 60 5" preserveAspectRatio="none"><path d="M18 4h2M23 4h2M28 4h2M33 4h2M41 3.500h3M48 3.500h3" stroke="#aaa" stroke-width="1.500"/><path d="M55 1.500h3.500v3H55z" fill="#444"/></svg></div><div class="note">&gt;1 null</div>' + showMe([6, 7, 8, 10, 11, 18, 20], 6,
    `<div>For <b>horizontal bars</b> try</div><div>0 or more ${pill('Dimensions')}</div><div>1 or more ${pill('Measures', 1)}</div>`) });
```
